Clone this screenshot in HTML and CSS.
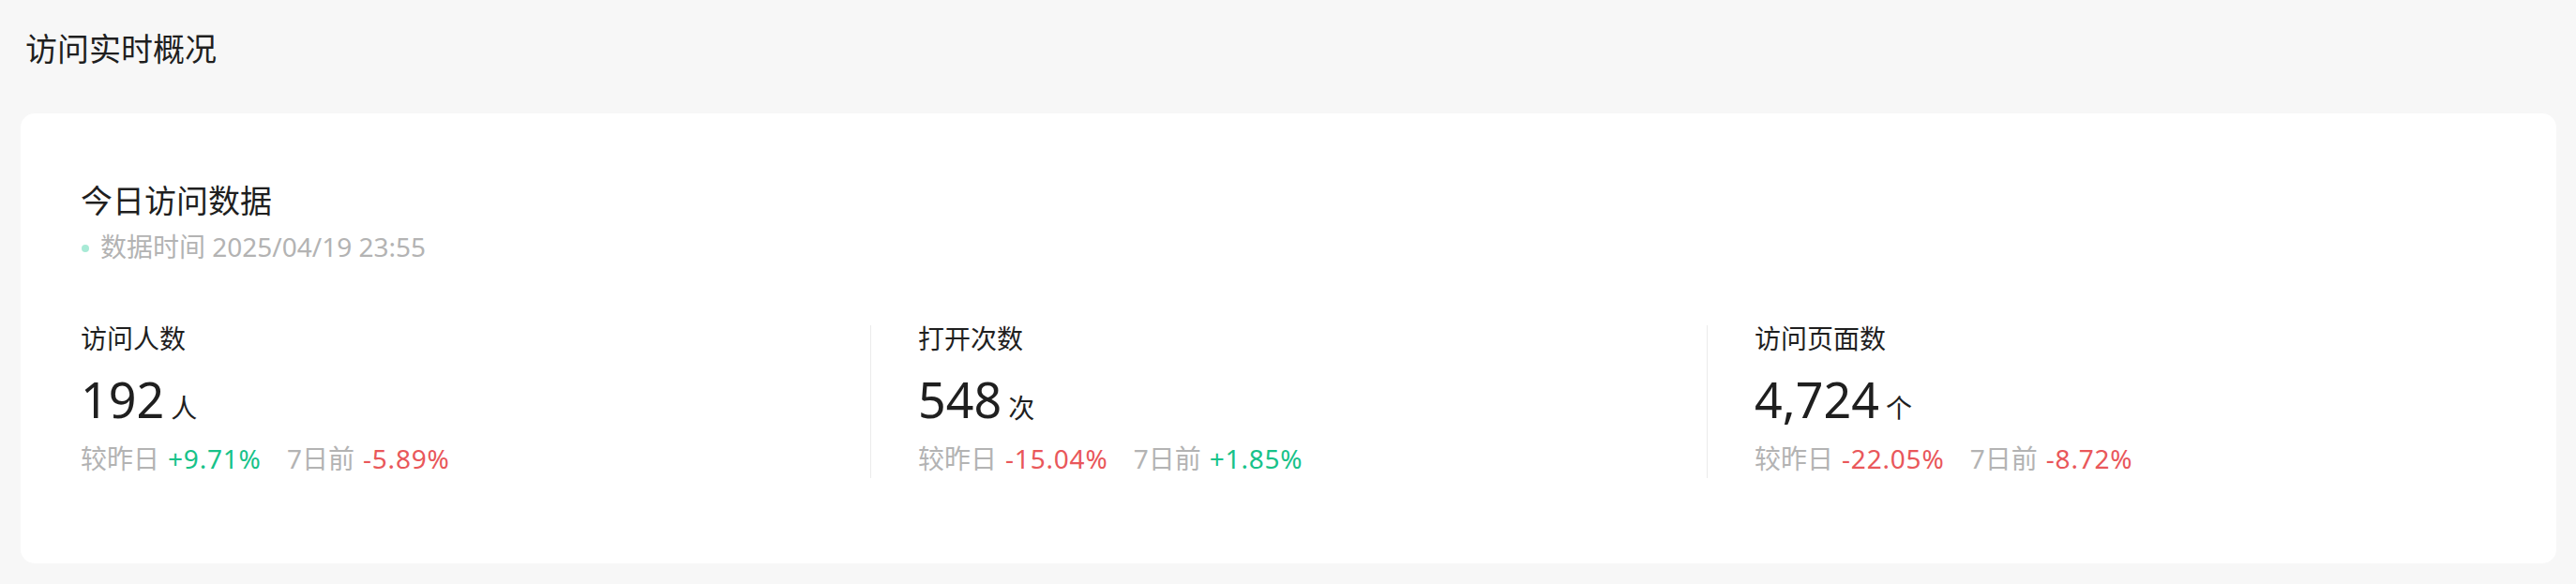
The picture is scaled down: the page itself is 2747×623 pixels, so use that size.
FILE: index.html
```html
<!DOCTYPE html>
<html lang="zh-CN">
<head>
    <meta charset="UTF-8">
    <meta name="viewport" content="width=device-width, initial-scale=1.0">
    <title>访问实时概况</title>
    <link rel="stylesheet" href="styles.css">
</head>
<body>
    <div class="page">
        <h1 class="page-title">访问实时概况</h1>

        <div class="card">
            <div class="card-head">
                <h2>今日访问数据</h2>
                <div class="data-time"><span class="dot"></span>数据时间 2025/04/19 23:55</div>
            </div>

            <div class="stats">
                <div class="stat">
                    <div class="stat-label">访问人数</div>
                    <div class="stat-value"><span class="num">192</span><span class="unit">人</span></div>
                    <div class="stat-compare">
                        <span>较昨日</span><span class="up">+9.71%</span>
                        <span class="sep">7日前</span><span class="down">-5.89%</span>
                    </div>
                </div>
                <div class="stat">
                    <div class="stat-label">打开次数</div>
                    <div class="stat-value"><span class="num">548</span><span class="unit">次</span></div>
                    <div class="stat-compare">
                        <span>较昨日</span><span class="down">-15.04%</span>
                        <span class="sep">7日前</span><span class="up">+1.85%</span>
                    </div>
                </div>
                <div class="stat">
                    <div class="stat-label">访问页面数</div>
                    <div class="stat-value"><span class="num">4,724</span><span class="unit">个</span></div>
                    <div class="stat-compare">
                        <span>较昨日</span><span class="down">-22.05%</span>
                        <span class="sep">7日前</span><span class="down">-8.72%</span>
                    </div>
                </div>
            </div>
        </div>
    </div>
</body>
</html>
```

FILE: styles.css
```css
body {
    margin: 0;
    background-color: #f7f7f7;
    font-family: "Noto Sans", "Noto Sans CJK SC", sans-serif;
    color: #1f1f1f;
}
.page {
    padding: 35px 21px 22px 22px;
}
.page-title {
    margin: 0 0 52px 5px;
    font-size: 34px;
    line-height: 34px;
    font-weight: normal;
}
.card {
    background-color: white;
    border-radius: 15px;
    padding: 76px 14px 91px 14px;
}
.card-head {
    padding-left: 50px;
}
.card-head h2 {
    margin: 0;
    font-size: 34px;
    line-height: 34px;
    font-weight: normal;
}
.data-time {
    display: flex;
    align-items: center;
    margin-top: 18px;
    font-size: 28px;
    line-height: 28px;
    color: #b3b3b3;
}
.dot {
    width: 8px;
    height: 8px;
    border-radius: 50%;
    background-color: #a8ead6;
    margin: 4px 12px 0 1px;
}
.stats {
    display: grid;
    grid-template-columns: 1fr 1fr 1fr;
    margin-top: 70px;
}
.stat {
    padding: 0 0 7px 50px;
}
.stat + .stat {
    border-left: 1px solid #ebebeb;
}
.stat-label {
    font-size: 28px;
    line-height: 28px;
}
.stat-value {
    display: flex;
    align-items: baseline;
    margin-top: 25px;
}
.stat-value .num {
    font-size: 52px;
    line-height: 52px;
}
.stat-value .unit {
    font-size: 28px;
    line-height: 28px;
    margin-left: 7px;
}
.stat-compare {
    margin-top: 23px;
    font-size: 28px;
    line-height: 28px;
    color: #b3b3b3;
    white-space: nowrap;
}
.stat-compare .up,
.stat-compare .down {
    margin-left: 9px;
    letter-spacing: 0.8px;
}
.stat-compare .sep {
    margin-left: 20px;
}
.up {
    color: #17c289;
}
.down {
    color: #e9575a;
}
```
